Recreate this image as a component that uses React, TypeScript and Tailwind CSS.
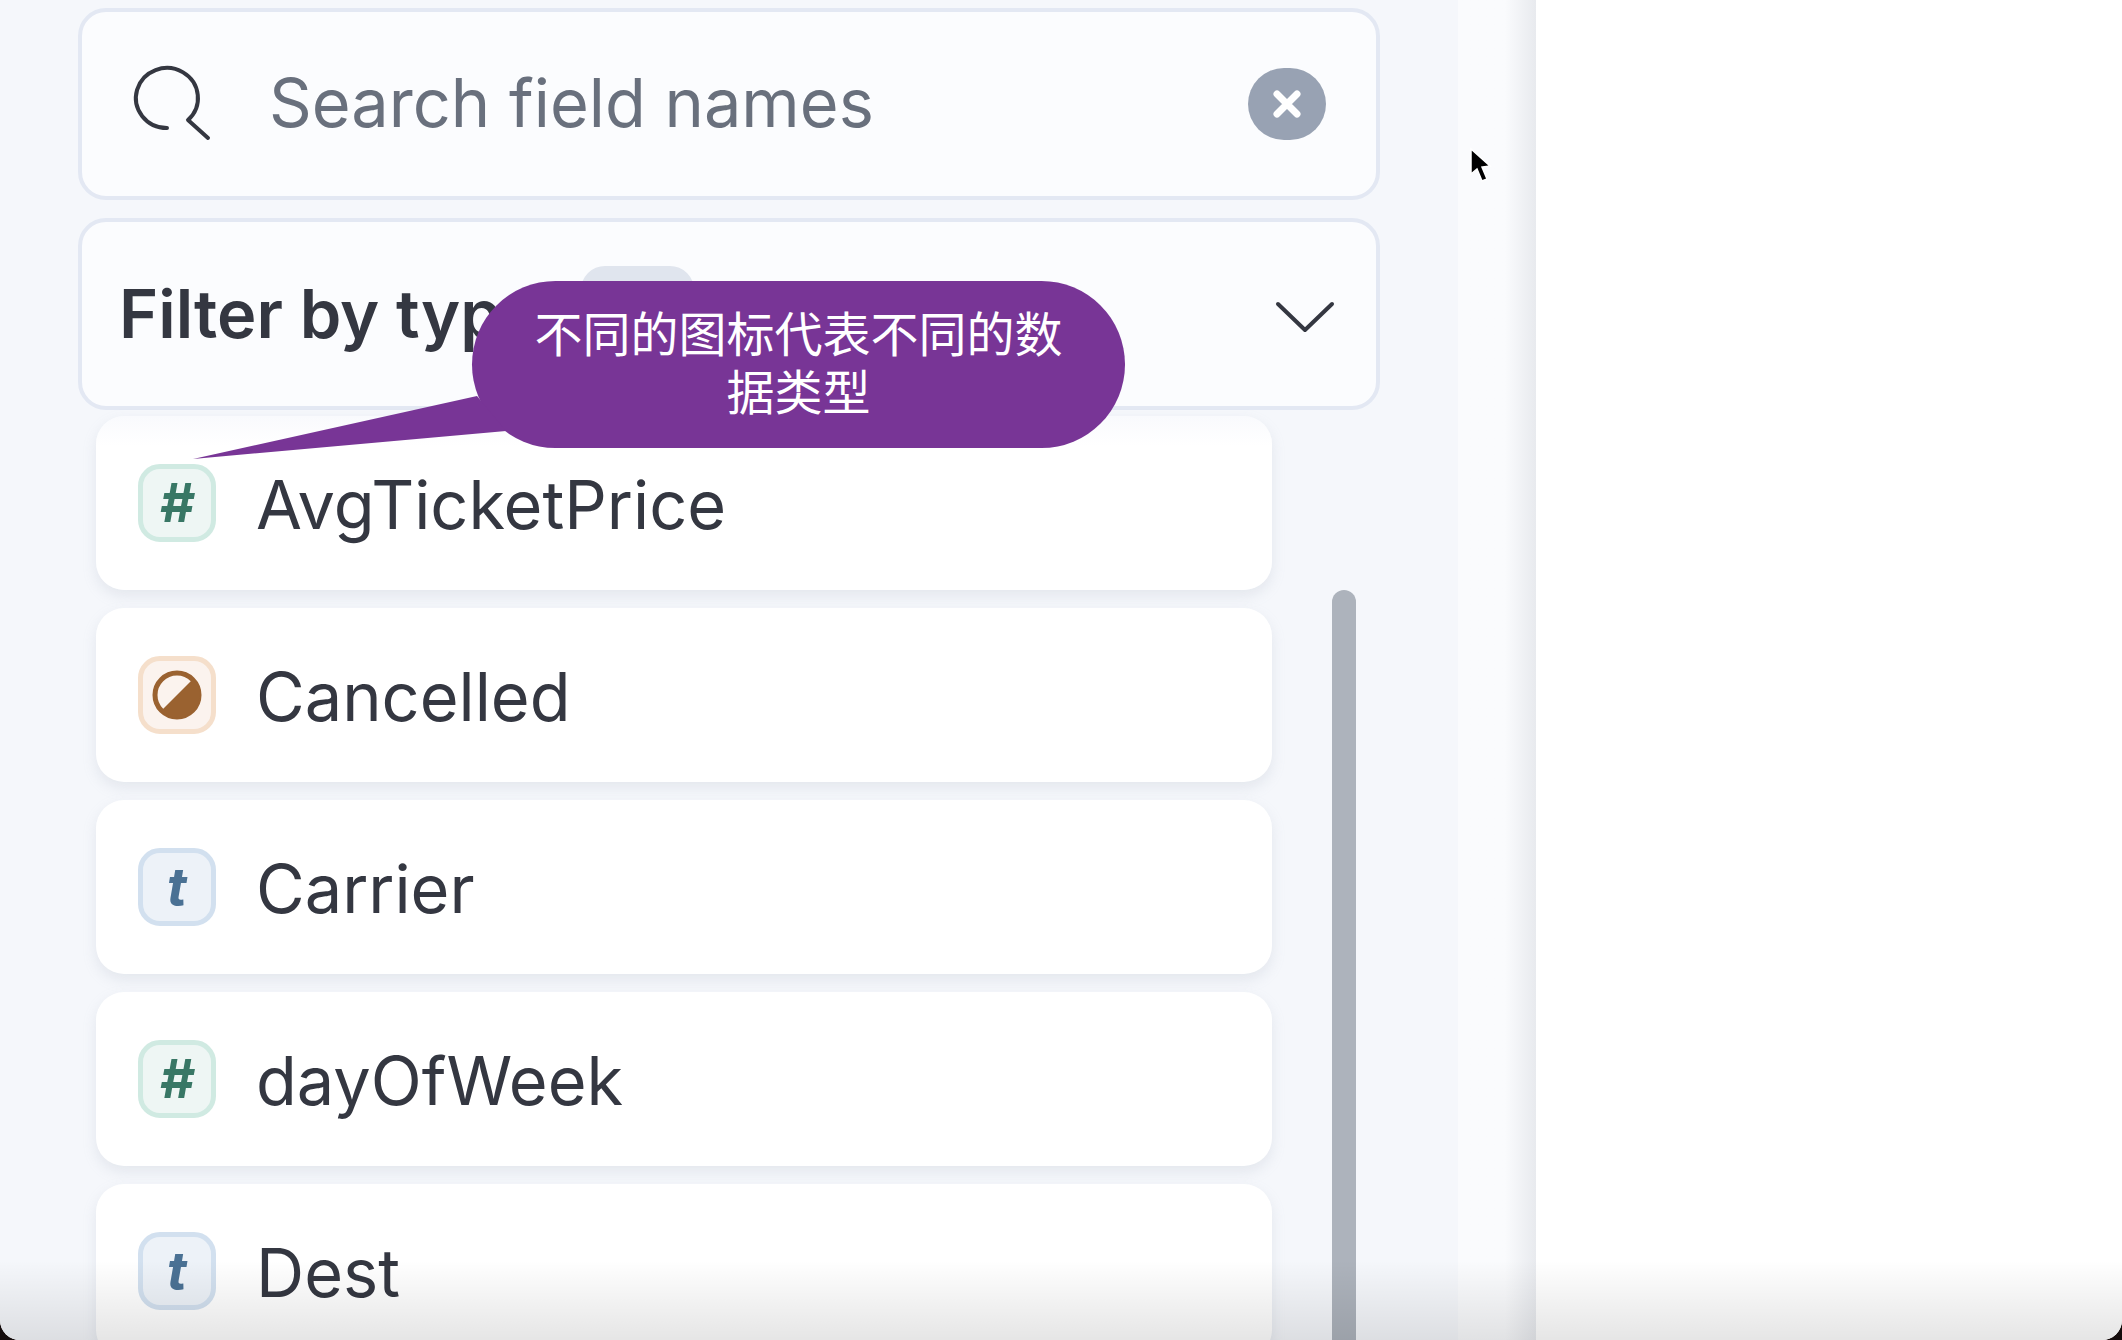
import { ReactNode } from 'react';

interface Field {
  name: string;
  type: 'number' | 'boolean' | 'string';
}

const fields: Field[] = [
  { name: 'AvgTicketPrice', type: 'number' },
  { name: 'Cancelled', type: 'boolean' },
  { name: 'Carrier', type: 'string' },
  { name: 'dayOfWeek', type: 'number' },
  { name: 'Dest', type: 'string' },
];

function TypeToken({ type }: { type: Field['type'] }) {
  if (type === 'number') {
    return (
      <span className="flex h-[78px] w-[78px] shrink-0 items-center justify-center rounded-[22px] border-[5px] border-[#d0eae2] bg-[#eef6f4] text-[54px] font-bold italic leading-none text-[#387765]">
        #
      </span>
    );
  }
  if (type === 'string') {
    return (
      <span className="flex h-[78px] w-[78px] shrink-0 items-center justify-center rounded-[22px] border-[5px] border-[#d2e0ef] bg-[#edf2f8] text-[54px] font-bold italic leading-none text-[#4a7194]">
        t
      </span>
    );
  }
  return (
    <span className="flex h-[78px] w-[78px] shrink-0 items-center justify-center rounded-[22px] border-[5px] border-[#f5dfcb] bg-[#fbf3ee]">
      <svg width="50" height="50" viewBox="0 0 50 50">
        <circle cx="25" cy="25" r="22" fill="none" stroke="#9a6230" strokeWidth="5" />
        <path d="M41 9 A22.500 22.500 0 0 1 9 41 Z" fill="#9a6230" />
      </svg>
    </span>
  );
}

function InputBox({ children }: { children: ReactNode }) {
  return (
    <div className="flex h-[192px] w-[1302px] items-center rounded-[28px] border-[4px] border-[#e3e8f3] bg-[#fbfcfe]">
      {children}
    </div>
  );
}

export default function App() {
  return (
    <div className="h-[1340px] w-[2122px] overflow-hidden bg-[#140c0c] font-['Inter',sans-serif]">
      <div className="relative flex h-full overflow-hidden rounded-b-[20px] bg-white">
        {/* Field list panel */}
        <div className="w-[1458px] shrink-0 overflow-hidden bg-[#f5f7fb] pl-[78px] pt-[8px]">
          <InputBox>
            <svg className="ml-[46px] shrink-0" width="92" height="92" viewBox="0 0 92 92" fill="none">
              <path
                d="M39 70 A31 30 0 1 1 60 62 L80 80"
                stroke="#343741"
                strokeWidth="4"
                strokeLinecap="round"
                strokeLinejoin="round"
              />
            </svg>
            <span className="ml-[49px] pb-[1px] text-[66.7px] leading-none text-[#69707d]">Search field names</span>
            <button className="ml-auto mr-[50px] flex h-[72px] w-[78px] items-center justify-center rounded-full bg-[#98a2b3]">
              <svg width="34" height="34" viewBox="0 0 34 34" fill="none">
                <path d="M7 7 L27 27 M27 7 L7 27" stroke="#fff" strokeWidth="7" strokeLinecap="round" />
              </svg>
            </button>
          </InputBox>
          <div className="mt-[18px]">
            <InputBox>
              <span className="ml-[37px] text-[66.7px] font-[560] leading-none text-[#343741]">Filter by type</span>
              <span className="ml-[40px] mt-[44px] h-[76px] w-[113px] self-start rounded-[24px] bg-[#e0e5ee]" />
              <svg className="ml-auto mr-[41px] mt-[6px]" width="60" height="34" viewBox="0 0 60 34" fill="none">
                <path d="M3 4 L30 30 L57 4" stroke="#343741" strokeWidth="4" strokeLinecap="round" strokeLinejoin="round" />
              </svg>
            </InputBox>
          </div>
          <div className="mt-[6px] flex pl-[18px]">
            <div className="flex w-[1176px] shrink-0 flex-col gap-[18px]">
              {fields.map((f, i) => (
                <div
                  key={f.name}
                  className={
                    i === 0
                      ? 'flex h-[174px] shrink-0 items-center gap-[40px] rounded-[28px] bg-gradient-to-b from-[#f9fafd] to-white to-[30px] pl-[42px] shadow-[0_6px_14px_rgba(152,162,179,0.18)]'
                      : 'flex h-[174px] shrink-0 items-center gap-[40px] rounded-[28px] bg-white pl-[42px] shadow-[0_6px_14px_rgba(152,162,179,0.18)]'
                  }
                >
                  <TypeToken type={f.type} />
                  <span className="pt-[4px] text-[66.7px] leading-none text-[#343741]">{f.name}</span>
                </div>
              ))}
            </div>
            <div className="ml-[60px] mt-[174px] h-[800px] w-[24px] shrink-0 rounded-t-[12px] bg-[#adb3bc]" />
          </div>
        </div>

        {/* Strip between the panels */}
        <div className="w-[78px] shrink-0 bg-gradient-to-r from-[#fafbfd] from-60% to-[#e8eaee]" />

        {/* Empty main area */}
        <div className="flex-1 rounded-tl-[12px] bg-white" />

        {/* Tour tooltip */}
        <div className="absolute left-[472px] top-[281px] flex h-[167px] w-[653px] items-center justify-center rounded-[84px] bg-[#783596] px-[50px] pb-[10px] text-center font-['Noto_Sans_CJK_SC',sans-serif] text-[48px] leading-[58px] text-white">
          不同的图标代表不同的数据类型
        </div>
        <svg className="absolute left-[190px] top-[390px]" width="330" height="72" viewBox="0 0 330 72">
          <path d="M3 69 L287 6 L316 41 Z" fill="#783596" />
        </svg>

        {/* Mouse pointer */}
        <svg className="absolute left-[1468px] top-[146px]" width="28" height="40" viewBox="0 0 28 40">
          <path d="M3 3 L3 28 L9 23 L14 35 L19 33 L14 21 L22 20 Z" fill="#000" stroke="#fff" strokeWidth="1.500" />
        </svg>

        {/* Window edge shade */}
        <div className="pointer-events-none absolute inset-x-0 bottom-0 h-[80px] bg-gradient-to-b from-transparent to-black/10" />
      </div>
    </div>
  );
}
